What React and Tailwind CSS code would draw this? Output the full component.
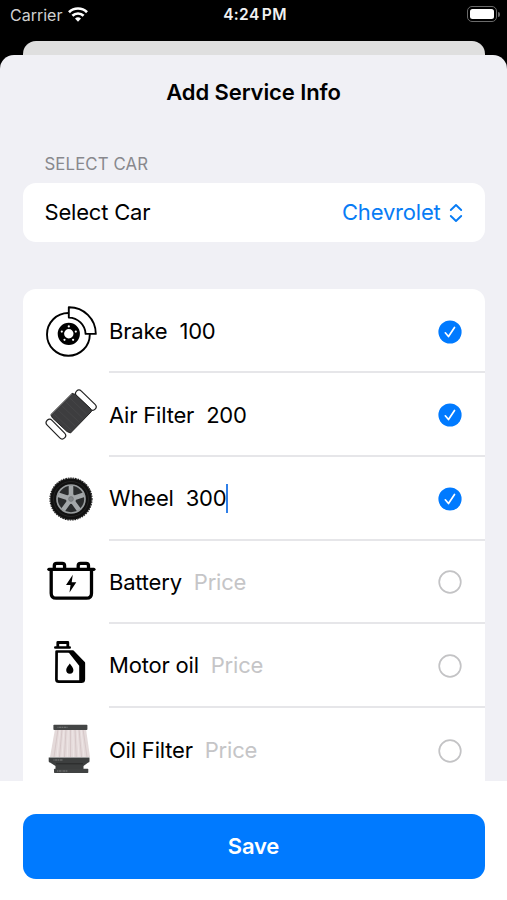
import { useState } from 'react';

const BrakeIcon = () => (
    <svg viewBox="9 9 52 52" className="w-[52px] h-[52px]" fill="none">
        <circle cx="32.4" cy="37.4" r="21.4" stroke="#000" strokeWidth="1.9" />
        <path d="M32.8 10.3a26.6 26.6 0 0 1 27 26.6H49.6A17 17 0 0 0 32.8 20.6Z" fill="#fff" stroke="#000" strokeWidth="1.9" strokeLinejoin="round" />
        <circle cx="32.8" cy="36.8" r="7.9" stroke="#000" strokeWidth="6.4" />
        <g fill="#fff">
            <circle cx="32.8" cy="29.4" r="1.1" />
            <circle cx="39.8" cy="34.6" r="1.1" />
            <circle cx="37.1" cy="42.8" r="1.1" />
            <circle cx="28.5" cy="42.8" r="1.1" />
            <circle cx="25.8" cy="34.6" r="1.1" />
        </g>
    </svg>
);

const AirFilterIcon = () => (
    <svg viewBox="9 9 52 52" className="w-[52px] h-[52px]" fill="none" strokeLinecap="round">
        <path d="m43 13.5 13.7 13.3" stroke="#222" strokeWidth="8" />
        <path d="m43 13.5 13.7 13.3" stroke="#fff" strokeWidth="5.6" />
        <path d="m13.6 42.7 12.6 12.8" stroke="#222" strokeWidth="8" />
        <path d="m13.6 42.7 12.6 12.8" stroke="#fff" strokeWidth="5.6" />
        <path d="M36.5 13.5 39.5 14.5 54.5 28.5 55.5 31.5 34.5 53 31 51.5 16.5 38 15 35Z" fill="#3d3d3f" stroke="#242424" strokeLinejoin="round" />
        <path d="m34 18 16.5 16M30 22l16.5 16M26 26l17 16M22 30l17 16M18 34l17 16" stroke="#4b4b4d" strokeWidth=".6" />
    </svg>
);

const WheelIcon = () => (
    <svg viewBox="9 9 52 52" className="w-[52px] h-[52px]" fill="none">
        <circle cx="35" cy="35" r="20.8" fill="#111" />
        <circle cx="35" cy="35" r="21" stroke="#222" strokeWidth="1.2" strokeDasharray="1.6 .9" />
        <circle cx="35" cy="35" r="17.5" stroke="#2b2b2b" strokeWidth=".7" />
        <circle cx="35" cy="35" r="14" fill="#292b2c" stroke="#989c9e" strokeWidth="1.7" />
        <g stroke="#a3a7a9" strokeWidth="4.6">
            <path d="M35 35V21.5M35 35l12.8-4.2M35 35l7.9 10.9M35 35l-7.9 10.9M35 35l-12.8-4.2" />
        </g>
        <circle cx="35" cy="35" r="5" fill="#a3a7a9" />
        <circle cx="35" cy="35" r="2.4" fill="#85898b" stroke="#686c6e" strokeWidth=".6" />
    </svg>
);

const BatteryIcon = () => (
    <svg viewBox="9 9 52 52" className="w-[52px] h-[52px]" fill="none" stroke="#000" strokeWidth="3.3" strokeLinejoin="round">
        <path d="M18.3 22v-3.2q0-2.4 2.4-2.4h5.5q2.4 0 2.4 2.4V22M42.2 22v-3.2q0-2.4 2.4-2.4h5.5q2.4 0 2.4 2.4V22" />
        <path d="M12.9 22.3h45" strokeLinecap="round" />
        <path d="M15.2 22.3v23.9q0 5 5 5h30.3q5 0 5-5V22.3" />
        <path d="M36.8 27.8 30 38h4.5l-1 7.5 6.8-10.3h-4.6Z" fill="#000" stroke="none" />
    </svg>
);

const MotorOilIcon = () => (
    <svg viewBox="9 9 52 52" className="w-[52px] h-[52px]" fill="none">
        <path d="M19.3 16.5h14.4" stroke="#000" strokeWidth="2.6" strokeLinecap="round" />
        <path d="M21.8 16v-4.5h10V16" stroke="#000" strokeWidth="2.8" strokeLinejoin="round" />
        <path d="M20.6 20.5h16L47.8 32v16.2q0 2.5-2.5 2.5H22.9q-2.5 0-2.5-2.5Z" stroke="#000" strokeWidth="2.7" strokeLinejoin="round" />
        <path d="M31.5 20h5.2L48 31.8V48q0 2.7-3 2.7h-1.8V34.8Z" fill="#000" />
        <path d="M33.8 32.5c1.6 2.4 3.6 4.3 3.6 6.6a3.6 3.6 0 0 1-7.2 0c0-2.3 2-4.2 3.6-6.6Z" fill="#000" />
    </svg>
);

const OilFilterIcon = () => (
    <svg viewBox="9 9 52 52" className="w-[52px] h-[52px]" fill="none">
        <path d="M19 14h31l4 28H14Z" fill="#e4dada" />
        <path d="m22 14-4 28M26 14l-2.5 28M30 14l-1.5 28M34.5 14v28M39 14l1.2 28M43 14l2.5 28M47 14l4 28" stroke="#d3c3c4" strokeWidth=".8" />
        <path d="m24 14-3 28M28 14l-2 28M32.3 14l-1 28M36.7 14l.8 28M41 14l2 28M45 14l3 28" stroke="#efe7e7" strokeWidth=".9" />
        <rect x="17.4" y="9.7" width="34" height="5.3" rx=".8" fill="#434545" />
        <path d="M12.7 42.5h40.8v3.8q0 1.3-1.3 1.3L47.5 51v3h-28v-3l-5.5-3.4q-1.3 0-1.3-1.3Z" fill="#3d3f3f" />
        <path d="M20 48.8h27" stroke="#292a2a" />
        <rect x="18" y="53.7" width="34.3" height="4.3" rx=".7" fill="#404242" />
        <path d="M21.5 12.3H32M17.5 45H27M21 56h11" stroke="#7c7e7e" strokeDasharray="1 .6 2.4 .5" strokeWidth="1.1" />
    </svg>
);

const initialServices = [
    { name: 'Brake', price: '100', done: true, Icon: BrakeIcon },
    { name: 'Air Filter', price: '200', done: true, Icon: AirFilterIcon },
    { name: 'Wheel', price: '300', done: true, editing: true, Icon: WheelIcon },
    { name: 'Battery', price: '', done: false, Icon: BatteryIcon },
    { name: 'Motor oil', price: '', done: false, Icon: MotorOilIcon },
    { name: 'Oil Filter', price: '', done: false, Icon: OilFilterIcon },
];

const StatusBar = () => (
    <div className="grid grid-cols-3 items-center h-[41px] pl-2.5 pr-[7px] pb-[12px] text-[#f1f1f1]">
        <div className="flex items-center gap-[6px]">
            <span className="text-[16px] text-[#d0d0d0]">Carrier</span>
            <svg viewBox="0 0 20 15" className="w-5 h-[15px]" fill="none" stroke="#fff" strokeWidth="2.7">
                <path d="M1 5.2a12.8 12.8 0 0 1 18 0M4.4 8.8a8 8 0 0 1 11.2 0" />
                <path d="M7 11.6a4.3 4.3 0 0 1 6 0L10 14.7Z" fill="#fff" stroke="none" />
            </svg>
        </div>
        <span className="text-center text-[15.5px] font-semibold tracking-[0.35px] [word-spacing:-2px] whitespace-nowrap">4:24 PM</span>
        <div className="flex items-center justify-end gap-[1px] -mt-px">
            <div className="w-[30px] h-4 rounded-[5px] border border-[#6a6a6a] p-[2px]">
                <div className="h-full rounded-[2.5px] bg-white" />
            </div>
            <div className="w-[2px] h-[5px] rounded-r-full bg-[#666]" />
        </div>
    </div>
);

const ServiceRow = ({ service, onToggle, last }) => {
    const { name, price, done, editing, Icon } = service;

    return (
        <div className="flex h-[83.6px] pl-[22px]">
            <div className="flex items-center w-[64.5px] shrink-0">
                <Icon />
            </div>
            <div className={`flex flex-1 items-center pt-[2px] pr-[23px] ${last ? '' : 'border-b-2 border-[#e6e6e9]'}`}>
                <span className="text-[22px] tracking-[-0.2px] whitespace-pre">{name}</span>
                <span className={`ml-3 text-[22px] tracking-[-0.2px] ${price ? '' : 'text-[#c5c5c7]'}`}>{price || 'Price'}</span>
                {editing && <span className="w-[2px] h-[29px] bg-[#2f7fe8]" />}
                <button onClick={onToggle} className="ml-auto">
                    {done ? (
                        <svg viewBox="0 0 24 24" className="w-6 h-6" fill="none">
                            <circle cx="12" cy="12" r="11.6" fill="#007aff" />
                            <path d="m7.3 12.8 3.2 3.7 6-9" stroke="#fff" strokeWidth="1.7" strokeLinecap="round" strokeLinejoin="round" />
                        </svg>
                    ) : (
                        <svg viewBox="0 0 24 24" className="w-6 h-6" fill="none">
                            <circle cx="12" cy="12" r="10.8" stroke="#c3c3c5" strokeWidth="1.7" />
                        </svg>
                    )}
                </button>
            </div>
        </div>
    );
};

const App = () => {
    const [services, setServices] = useState(initialServices);

    const toggle = (name) =>
        setServices(services.map((s) => (s.name === name ? { ...s, done: !s.done } : s)));

    return (
        <div className="flex flex-col w-[507px] h-[900px] overflow-hidden bg-black text-black font-['Inter',sans-serif]">
            <StatusBar />

            {/* Sheet underneath */}
            <div className="h-[27px] mx-[22.5px] -mb-[13px] shrink-0 rounded-t-[13px] bg-[#dfdfdf]" />

            <main className="relative flex flex-col flex-1 min-h-0 rounded-t-[14px] bg-[#f0f0f5] overflow-hidden">
                <h1 className="mt-[20px] text-center text-[22px] leading-[34px] font-semibold tracking-[-0.1px]">Add Service Info</h1>

                <div className="flex flex-col flex-1 min-h-0 px-[22.5px] overflow-hidden">
                    <p className="mt-[43px] pl-[22px] text-[16.8px] leading-6 tracking-[0.1px] text-[#88888d]">SELECT CAR</p>
                    <div className="flex items-center justify-between shrink-0 mt-[7px] h-[59px] px-[22px] rounded-[13px] bg-white text-[22px] tracking-[-0.2px]">
                        <span>Select Car</span>
                        <button className="flex items-center gap-2 text-[#087cf5]">
                            Chevrolet
                            <svg viewBox="0 0 14 20" className="w-3.5 h-5" fill="none" stroke="currentColor" strokeWidth="1.9" strokeLinecap="round" strokeLinejoin="round">
                                <path d="m1.8 7 5.2-5 5.2 5M1.8 13l5.2 5 5.2-5" />
                            </svg>
                        </button>
                    </div>

                    <div className="mt-[47px] pt-[0.8px] rounded-t-[13px] bg-white">
                        {services.map((service, i) => (
                            <ServiceRow
                                key={service.name}
                                service={service}
                                last={i === services.length - 1}
                                onToggle={() => toggle(service.name)}
                            />
                        ))}
                    </div>
                </div>

                <footer className="shrink-0 h-[119px] px-[22.5px] pt-[33px] bg-white">
                    <button className="w-full h-[65px] rounded-[13px] bg-[#007aff] text-white text-[22px] font-semibold tracking-[-0.2px]">Save</button>
                </footer>
            </main>
        </div>
    );
};

export default App;
